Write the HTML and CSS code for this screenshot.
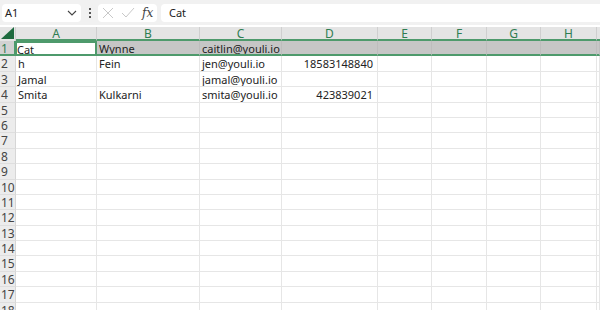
FILE: index.html
```html
<!DOCTYPE html>
<html>
<head>
<meta charset="utf-8">
<link rel="stylesheet" href="styles.css">
</head>
<body>
<div class="bar">
  <div class="namebox"><span class="ref">A1</span>
    <svg class="chev" width="10" height="6" viewBox="0 0 10 6"><path d="M1 1 L5 5 L9 1" fill="none" stroke="#444" stroke-width="1.1"/></svg>
  </div>
  <div class="dots"><i></i><i></i><i></i></div>
  <div class="fbtns">
    <svg width="12" height="12" viewBox="0 0 12 12"><path d="M1 1 L11 11 M11 1 L1 11" stroke="#c8c8c8" stroke-width="1"/></svg>
    <svg width="14" height="12" viewBox="0 0 14 12"><path d="M1 6 L5 10 L13 1" fill="none" stroke="#c8c8c8" stroke-width="1"/></svg>
    <span class="fx">fx</span>
  </div>
  <div class="finput">Cat</div>
</div>
<div class="sheet">
  <div class="corner"><svg width="13" height="12" viewBox="0 0 13 12"><path d="M13 0 L13 12 L0 12 Z" fill="#1e6b3f"/></svg></div>
  <div class="ch">A</div><div class="ch">B</div><div class="ch">C</div><div class="ch">D</div><div class="ch">E</div><div class="ch">F</div><div class="ch">G</div><div class="ch">H</div><div class="ch last"></div>

  <div class="rh sel">1</div>
  <div class="c active">Cat</div><div class="c s">Wynne</div><div class="c s">caitlin@youli.io</div><div class="c s"></div><div class="c s"></div><div class="c s"></div><div class="c s"></div><div class="c s"></div><div class="c s"></div>

  <div class="rh">2</div>
  <div class="c">h</div><div class="c">Fein</div><div class="c">jen@youli.io</div><div class="c n">18583148840</div><div class="c"></div><div class="c"></div><div class="c"></div><div class="c"></div><div class="c"></div>

  <div class="rh">3</div>
  <div class="c">Jamal</div><div class="c"></div><div class="c">jamal@youli.io</div><div class="c"></div><div class="c"></div><div class="c"></div><div class="c"></div><div class="c"></div><div class="c"></div>

  <div class="rh">4</div>
  <div class="c">Smita</div><div class="c">Kulkarni</div><div class="c">smita@youli.io</div><div class="c n">423839021</div><div class="c"></div><div class="c"></div><div class="c"></div><div class="c"></div><div class="c"></div>

  <div class="rh">5</div><div class="c"></div><div class="c"></div><div class="c"></div><div class="c"></div><div class="c"></div><div class="c"></div><div class="c"></div><div class="c"></div><div class="c"></div>
  <div class="rh">6</div><div class="c"></div><div class="c"></div><div class="c"></div><div class="c"></div><div class="c"></div><div class="c"></div><div class="c"></div><div class="c"></div><div class="c"></div>
  <div class="rh">7</div><div class="c"></div><div class="c"></div><div class="c"></div><div class="c"></div><div class="c"></div><div class="c"></div><div class="c"></div><div class="c"></div><div class="c"></div>
  <div class="rh">8</div><div class="c"></div><div class="c"></div><div class="c"></div><div class="c"></div><div class="c"></div><div class="c"></div><div class="c"></div><div class="c"></div><div class="c"></div>
  <div class="rh">9</div><div class="c"></div><div class="c"></div><div class="c"></div><div class="c"></div><div class="c"></div><div class="c"></div><div class="c"></div><div class="c"></div><div class="c"></div>
  <div class="rh">10</div><div class="c"></div><div class="c"></div><div class="c"></div><div class="c"></div><div class="c"></div><div class="c"></div><div class="c"></div><div class="c"></div><div class="c"></div>
  <div class="rh">11</div><div class="c"></div><div class="c"></div><div class="c"></div><div class="c"></div><div class="c"></div><div class="c"></div><div class="c"></div><div class="c"></div><div class="c"></div>
  <div class="rh">12</div><div class="c"></div><div class="c"></div><div class="c"></div><div class="c"></div><div class="c"></div><div class="c"></div><div class="c"></div><div class="c"></div><div class="c"></div>
  <div class="rh">13</div><div class="c"></div><div class="c"></div><div class="c"></div><div class="c"></div><div class="c"></div><div class="c"></div><div class="c"></div><div class="c"></div><div class="c"></div>
  <div class="rh">14</div><div class="c"></div><div class="c"></div><div class="c"></div><div class="c"></div><div class="c"></div><div class="c"></div><div class="c"></div><div class="c"></div><div class="c"></div>
  <div class="rh">15</div><div class="c"></div><div class="c"></div><div class="c"></div><div class="c"></div><div class="c"></div><div class="c"></div><div class="c"></div><div class="c"></div><div class="c"></div>
  <div class="rh">16</div><div class="c"></div><div class="c"></div><div class="c"></div><div class="c"></div><div class="c"></div><div class="c"></div><div class="c"></div><div class="c"></div><div class="c"></div>
  <div class="rh">17</div><div class="c"></div><div class="c"></div><div class="c"></div><div class="c"></div><div class="c"></div><div class="c"></div><div class="c"></div><div class="c"></div><div class="c"></div>
  <div class="rh">18</div><div class="c"></div><div class="c"></div><div class="c"></div><div class="c"></div><div class="c"></div><div class="c"></div><div class="c"></div><div class="c"></div><div class="c"></div>
</div>
</body>
</html>
```
FILE: styles.css
```css
* { box-sizing: border-box; }
html, body { margin: 0; padding: 0; }
body {
  width: 600px; height: 310px; overflow: hidden;
  background: #fff;
  font-family: "Noto Sans", "Open Sans", sans-serif;
  font-size: 11px; color: #222;
}
.bar {
  height: 25px; background: #f1f1f1;
  display: flex; align-items: center; padding: 0 0 0 2px;
}
.namebox {
  width: 79px; height: 18px; background: #fff; border-radius: 4px;
  display: flex; align-items: center; justify-content: space-between;
  padding: 0 4px 0 3px; font-size: 11px; color: #222;
}
.chev { margin-top: 1px; }
.dots { width: 17px; display: flex; flex-direction: column; align-items: center; gap: 2px; }
.dots i { width: 2px; height: 2px; background: #555; display: block; }
.fbtns {
  width: 59px; height: 18px; background: #fff; border-radius: 4px;
  display: flex; align-items: center; gap: 7px; padding-left: 4px;
}
.fx { font-family: "DejaVu Serif", "Liberation Serif", serif; font-style: italic; font-size: 12px; color: #444; }
.finput {
  flex: 1; height: 18px; background: #fff; border-radius: 4px 0 0 4px; margin-left: 4px;
  display: flex; align-items: center; padding-left: 8px; color: #222;
}
.sheet {
  margin-top: 2px;
  display: grid;
  grid-template-columns: 16px 81px 103px 82px 96px 54px 55px 54px 56px 1fr;
  grid-template-rows: 14px repeat(18, 15.4px);
}
.corner { background: #e4e4e4; display: flex; align-items: flex-end; justify-content: flex-end; padding: 0 1px 2px 0; border-right: 1px solid #d0d0d0; }
.ch {
  background: #e4e4e4; color: #2f7d52; text-align: center; line-height: 13px;
  border-right: 1px solid #cfcfcf; border-bottom: 2px solid #4e9a6c; font-size: 12px;
}
.ch.last { border-right: none; }
.rh {
  background: #ececec; color: #444; font-size: 12px; line-height: 15px;
  padding-left: 1px; border-bottom: 1px solid #dedede; border-right: 1px solid #d6d6d6;
}
.rh.sel { background: #d2d2d2; color: #2f7d52; border-right: 2px solid #4e9a6c; border-bottom: 2px solid #4e9a6c; }
.c {
  border-right: 1px solid #e6e6e6; border-bottom: 1px solid #e6e6e6;
  padding-left: 2px; line-height: 15px; white-space: nowrap; overflow: hidden;
}
.c.s { background: #c6c6c6; border-right-color: #bdbdbd; border-bottom: 2px solid #4e9a6c; }
.c.active { background: #fff; border: 2px solid #4e9a6c; border-left-width: 1px; padding-left: 0; line-height: 13px; }
.c.n { text-align: right; padding-right: 4px; }
```
